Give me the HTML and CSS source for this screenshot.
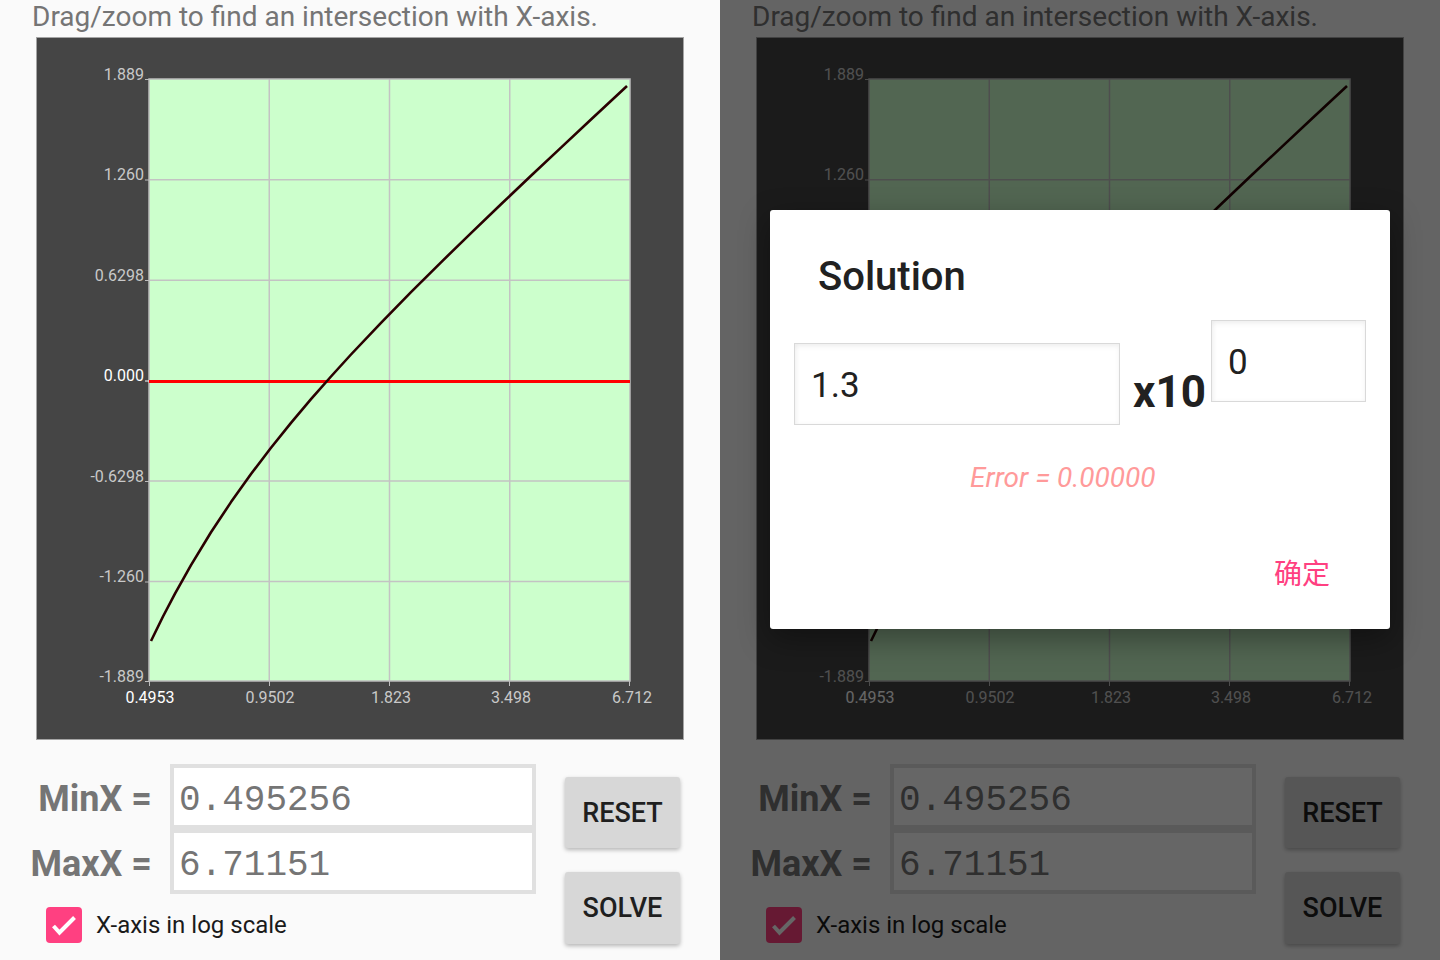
FILE: index.html
```html
<!DOCTYPE html>
<html lang="en">
<head>
<meta charset="utf-8">
<title>Intersection solver</title>
<link rel="stylesheet" href="styles.css">
</head>
<body>
<div class="screen">
  <section class="panel">
    <h1 class="hint">Drag/zoom to find an intersection with X-axis.</h1>
    <div class="graph">
      <svg class="plot" width="646" height="701" viewBox="37 38 646 701" xmlns="http://www.w3.org/2000/svg">
        <rect x="149" y="79" width="481" height="602" fill="#ccffcc"/>
        <g stroke="#c3c3c3" stroke-width="1.5">
          <line x1="269.25" y1="79" x2="269.25" y2="681"/>
          <line x1="389.5" y1="79" x2="389.5" y2="681"/>
          <line x1="509.75" y1="79" x2="509.75" y2="681"/>
          <line x1="149" y1="179.7" x2="630" y2="179.7"/>
          <line x1="149" y1="280.3" x2="630" y2="280.3"/>
          <line x1="149" y1="481" x2="630" y2="481"/>
          <line x1="149" y1="581.5" x2="630" y2="581.5"/>
        </g>
        <rect x="149" y="79" width="481" height="602" fill="none" stroke="#bcbcbc" stroke-width="1.5"/>
        <g stroke="#bdbdbd" stroke-width="1">
          <line x1="145" y1="79.5" x2="149" y2="79.5"/>
          <line x1="145" y1="180" x2="149" y2="180"/>
          <line x1="145" y1="280.5" x2="149" y2="280.5"/>
          <line x1="145" y1="381" x2="149" y2="381" stroke="#ffffff"/>
          <line x1="145" y1="481.5" x2="149" y2="481.5"/>
          <line x1="145" y1="582" x2="149" y2="582"/>
          <line x1="145" y1="681.5" x2="149" y2="681.5"/>
          <line x1="149.5" y1="681" x2="149.5" y2="686"/>
          <line x1="269.5" y1="681" x2="269.5" y2="686"/>
          <line x1="389.5" y1="681" x2="389.5" y2="686"/>
          <line x1="509.5" y1="681" x2="509.5" y2="686"/>
          <line x1="629.5" y1="681" x2="629.5" y2="686"/>
        </g>
        <line x1="149" y1="381.5" x2="630" y2="381.5" stroke="#ff0000" stroke-width="3"/>
        <polyline fill="none" stroke="#2a0000" stroke-width="2.6" stroke-linejoin="round"
          points="151,641 163,616.5 175,593.6 191,565.1 211,532.3 231,502.1 251,474 271,447.7 291,422.9 311,399.2 331,376.5 351,354.5 381,322.8 411,292.2 441,262.3 471,233.1 501,204.3 531,175.8 561,147.6 591,119.5 627,86"/>
        <g class="ylab" text-anchor="end">
          <text x="144" y="79.5">1.889</text>
          <text x="144" y="180">1.260</text>
          <text x="144" y="280.5">0.6298</text>
          <text x="144" y="381" class="zero">0.000</text>
          <text x="144" y="481.5">-0.6298</text>
          <text x="144" y="582">-1.260</text>
          <text x="144" y="681.5">-1.889</text>
        </g>
        <g class="xlab" text-anchor="middle">
          <text x="150" y="703" class="zero">0.4953</text>
          <text x="270" y="703">0.9502</text>
          <text x="391" y="703">1.823</text>
          <text x="511" y="703">3.498</text>
          <text x="632" y="703">6.712</text>
        </g>
      </svg>
    </div>
    <div class="controls">
      <div class="form">
        <div class="fields">
          <span class="lbl">MinX =</span><div class="field">0.495256</div>
          <span class="lbl">MaxX =</span><div class="field">6.71151</div>
        </div>
        <div class="check-row">
          <span class="checkbox">
            <svg width="36" height="36" viewBox="0 0 36 36"><polyline points="7.5,19 13.5,25.5 28.5,10.5" fill="none" stroke="#ffffff" stroke-width="4"/></svg>
          </span>
          <span class="check-label">X-axis in log scale</span>
        </div>
      </div>
      <div class="buttons">
        <div class="btn">RESET</div>
        <div class="btn btn-solve">SOLVE</div>
      </div>
    </div>
  </section>

  <section class="panel">
    <h1 class="hint">Drag/zoom to find an intersection with X-axis.</h1>
    <div class="graph">
      <svg class="plot" width="646" height="701" viewBox="37 38 646 701" xmlns="http://www.w3.org/2000/svg">
        <rect x="149" y="79" width="481" height="602" fill="#ccffcc"/>
        <g stroke="#c3c3c3" stroke-width="1.5">
          <line x1="269.25" y1="79" x2="269.25" y2="681"/>
          <line x1="389.5" y1="79" x2="389.5" y2="681"/>
          <line x1="509.75" y1="79" x2="509.75" y2="681"/>
          <line x1="149" y1="179.7" x2="630" y2="179.7"/>
          <line x1="149" y1="280.3" x2="630" y2="280.3"/>
          <line x1="149" y1="481" x2="630" y2="481"/>
          <line x1="149" y1="581.5" x2="630" y2="581.5"/>
        </g>
        <rect x="149" y="79" width="481" height="602" fill="none" stroke="#bcbcbc" stroke-width="1.5"/>
        <g stroke="#bdbdbd" stroke-width="1">
          <line x1="145" y1="79.5" x2="149" y2="79.5"/>
          <line x1="145" y1="180" x2="149" y2="180"/>
          <line x1="145" y1="280.5" x2="149" y2="280.5"/>
          <line x1="145" y1="381" x2="149" y2="381" stroke="#ffffff"/>
          <line x1="145" y1="481.5" x2="149" y2="481.5"/>
          <line x1="145" y1="582" x2="149" y2="582"/>
          <line x1="145" y1="681.5" x2="149" y2="681.5"/>
          <line x1="149.5" y1="681" x2="149.5" y2="686"/>
          <line x1="269.5" y1="681" x2="269.5" y2="686"/>
          <line x1="389.5" y1="681" x2="389.5" y2="686"/>
          <line x1="509.5" y1="681" x2="509.5" y2="686"/>
          <line x1="629.5" y1="681" x2="629.5" y2="686"/>
        </g>
        <line x1="149" y1="381.5" x2="630" y2="381.5" stroke="#ff0000" stroke-width="3"/>
        <polyline fill="none" stroke="#2a0000" stroke-width="2.6" stroke-linejoin="round"
          points="151,641 163,616.5 175,593.6 191,565.1 211,532.3 231,502.1 251,474 271,447.7 291,422.9 311,399.2 331,376.5 351,354.5 381,322.8 411,292.2 441,262.3 471,233.1 501,204.3 531,175.8 561,147.6 591,119.5 627,86"/>
        <g class="ylab" text-anchor="end">
          <text x="144" y="79.5">1.889</text>
          <text x="144" y="180">1.260</text>
          <text x="144" y="280.5">0.6298</text>
          <text x="144" y="381" class="zero">0.000</text>
          <text x="144" y="481.5">-0.6298</text>
          <text x="144" y="582">-1.260</text>
          <text x="144" y="681.5">-1.889</text>
        </g>
        <g class="xlab" text-anchor="middle">
          <text x="150" y="703" class="zero">0.4953</text>
          <text x="270" y="703">0.9502</text>
          <text x="391" y="703">1.823</text>
          <text x="511" y="703">3.498</text>
          <text x="632" y="703">6.712</text>
        </g>
      </svg>
    </div>
    <div class="controls">
      <div class="form">
        <div class="fields">
          <span class="lbl">MinX =</span><div class="field">0.495256</div>
          <span class="lbl">MaxX =</span><div class="field">6.71151</div>
        </div>
        <div class="check-row">
          <span class="checkbox">
            <svg width="36" height="36" viewBox="0 0 36 36"><polyline points="7.5,19 13.5,25.5 28.5,10.5" fill="none" stroke="#ffffff" stroke-width="4"/></svg>
          </span>
          <span class="check-label">X-axis in log scale</span>
        </div>
      </div>
      <div class="buttons">
        <div class="btn">RESET</div>
        <div class="btn btn-solve">SOLVE</div>
      </div>
    </div>

    <div class="scrim"></div>
    <div class="dialog">
      <h2 class="dlg-title">Solution</h2>
      <div class="dlg-row">
        <div class="num-box mant">1.3</div>
        <span class="x10">x10</span>
        <div class="num-box expo">0</div>
      </div>
      <p class="err">Error = 0.00000</p>
      <div class="dlg-actions"><span class="ok">确定</span></div>
    </div>
  </section>
</div>
</body>
</html>
```

FILE: styles.css
```css
* { box-sizing: border-box; }

html, body {
  margin: 0;
  padding: 0;
}

body {
  width: 1440px;
  height: 960px;
  overflow: hidden;
  background: #fafafa;
  font-family: Roboto, "Noto Sans", sans-serif;
}

.screen {
  display: flex;
  width: 1440px;
  height: 960px;
}

.panel {
  position: relative;
  width: 720px;
  height: 960px;
  background: #fafafa;
  overflow: hidden;
}

.hint {
  margin: 0;
  height: 37px;
  padding: 2px 0 0 32px;
  font-size: 28px;
  line-height: 30px;
  font-weight: 400;
  color: #757575;
  white-space: nowrap;
}

.graph {
  margin-left: 36px;
  width: 648px;
  height: 703px;
  background: #454545;
  border: 1px solid #a5a5a5;
}

.plot {
  display: block;
}

.ylab text,
.xlab text {
  font-family: Roboto, sans-serif;
  font-size: 16px;
  fill: #c9c9c9;
}

.ylab text.zero,
.xlab text.zero {
  fill: #ffffff;
}

.controls {
  display: flex;
  padding-top: 24px;
}

.form {
  width: 536px;
}

.fields {
  display: grid;
  grid-template-columns: 152px 366px;
  grid-auto-rows: 65px;
  column-gap: 18px;
}

.lbl {
  height: 65px;
  text-align: right;
  font-size: 36px;
  font-weight: 700;
  line-height: 71px;
  color: #757575;
  white-space: nowrap;
}

.field {
  height: 65px;
  border: 4px solid #e0e0e0;
  background: #ffffff;
  padding: 8px 0 0 5px;
  font-family: "Liberation Mono", "DejaVu Sans Mono", monospace;
  font-size: 36px;
  line-height: 49px;
  color: #757575;
}

.check-row {
  display: flex;
  align-items: center;
  margin-top: 13px;
  padding-left: 46px;
}

.checkbox {
  display: block;
  width: 36px;
  height: 36px;
  border-radius: 4px;
  background: #ff4081;
}

.checkbox svg {
  display: block;
}

.check-label {
  margin-left: 14px;
  font-size: 24px;
  line-height: 36px;
  color: #1a1a1a;
}

.buttons {
  display: flex;
  flex-direction: column;
  gap: 24px;
  margin-left: 29px;
  padding-top: 13px;
}

.btn {
  display: flex;
  align-items: center;
  justify-content: center;
  width: 115px;
  height: 71px;
  background: #d7d7d7;
  border-radius: 3px;
  box-shadow: 0 2px 4px rgba(0, 0, 0, 0.28);
  font-size: 27px;
  font-weight: 500;
  color: #1f1f1f;
}

.btn-solve {
  height: 72px;
}

.scrim {
  position: absolute;
  inset: 0;
  background: rgba(0, 0, 0, 0.6);
}

.dialog {
  position: absolute;
  left: 50px;
  top: 210px;
  width: 620px;
  height: 419px;
  background: #ffffff;
  border-radius: 3px;
  box-shadow: 0 10px 30px rgba(0, 0, 0, 0.35);
}

.dlg-title {
  margin: 0;
  padding: 43px 0 0 48px;
  font-size: 40px;
  font-weight: 500;
  line-height: 47px;
  color: #212121;
}

.dlg-row {
  display: flex;
  align-items: flex-start;
  margin-top: 20px;
  padding: 0 24px;
}

.num-box {
  height: 82px;
  background: #ffffff;
  border: 1px solid #d9d9d9;
  box-shadow: inset 0 3px 5px rgba(0, 0, 0, 0.05), inset 2px 0 4px rgba(0, 0, 0, 0.03);
  padding: 4px 0 0 16px;
  font-size: 35px;
  line-height: 76px;
  color: #212121;
}

.mant {
  width: 328px;
  margin-top: 23px;
}

.x10 {
  margin: 50px 5px 0 13px;
  font-size: 44px;
  font-weight: 700;
  line-height: 44px;
  color: #212121;
}

.expo {
  width: 156px;
}

.err {
  margin: 36px 0 0 200px;
  font-size: 28px;
  font-style: italic;
  line-height: 34px;
  color: #ff9a9a;
}

.dlg-actions {
  margin-top: 63px;
  padding-right: 60px;
  text-align: right;
}

.ok {
  font-family: "Noto Sans CJK SC", sans-serif;
  font-size: 28px;
  line-height: 28px;
  color: #ff4081;
}
```
